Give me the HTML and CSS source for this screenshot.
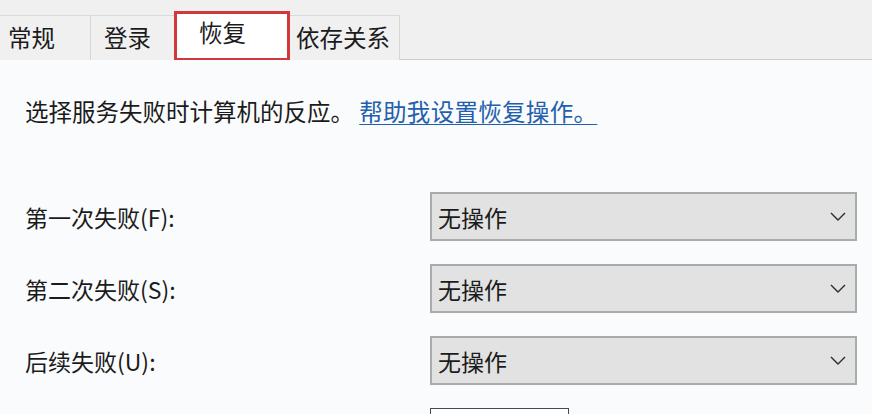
FILE: index.html
```html
<!DOCTYPE html>
<html lang="zh-CN">
<head>
<meta charset="utf-8">
<title>恢复</title>
<link rel="stylesheet" href="styles.css">
</head>
<body>
<div class="dialog">
  <div class="tabbar">
    <div class="tab tab-first">常规</div>
    <div class="tab tab-login">登录</div>
    <div class="tab tab-active">恢复</div>
    <div class="tab tab-dep">依存关系</div>
  </div>
  <div class="content">
    <p class="intro">选择服务失败时计算机的反应。 <a class="link" href="#">帮助我设置恢复操作。</a></p>
    <div class="rows">
      <div class="row">
        <span class="label">第一次失败(F):</span>
        <div class="select"><span class="value">无操作</span>
          <svg class="chev" width="16" height="9" viewBox="0 0 16 9"><polyline points="1,1 8,8 15,1" fill="none" stroke="#2b2b2b" stroke-width="1.4"/></svg>
        </div>
      </div>
      <div class="row">
        <span class="label">第二次失败(S):</span>
        <div class="select"><span class="value">无操作</span>
          <svg class="chev" width="16" height="9" viewBox="0 0 16 9"><polyline points="1,1 8,8 15,1" fill="none" stroke="#2b2b2b" stroke-width="1.4"/></svg>
        </div>
      </div>
      <div class="row">
        <span class="label">后续失败(U):</span>
        <div class="select"><span class="value">无操作</span>
          <svg class="chev" width="16" height="9" viewBox="0 0 16 9"><polyline points="1,1 8,8 15,1" fill="none" stroke="#2b2b2b" stroke-width="1.4"/></svg>
        </div>
      </div>
      <div class="row">
        <span class="label"></span>
        <div class="textbox"></div>
      </div>
    </div>
  </div>
</div>
</body>
</html>
```

FILE: styles.css
```css
html, body {
  margin: 0;
  padding: 0;
}
body {
  width: 872px;
  height: 414px;
  overflow: hidden;
  background: #fafbfc;
  font-family: "Noto Sans CJK SC", "Noto Sans", sans-serif;
  color: #1b1b1b;
}
.dialog {
  width: 872px;
  height: 414px;
  overflow: hidden;
  display: flex;
  flex-direction: column;
}
.tabbar {
  height: 60px;
  box-sizing: border-box;
  background: #f0f0f1;
  border-bottom: 1px solid #cbcbcb;
  display: flex;
  align-items: flex-end;
  padding-top: 16px;
  flex-shrink: 0;
}
.tab {
  box-sizing: border-box;
  display: flex;
  align-items: center;
  font-size: 23.5px;
  line-height: 1;
  border-top: 1px solid #dadada;
  border-right: 1px solid #d6d6d6;
  background: #f0f0f1;
  margin-bottom: -1px;
  height: 45px;
}
.tab-first {
  width: 91px;
  padding-left: 8px;
}
.tab-login {
  width: 84px;
  padding-left: 13px;
}
.tab-active {
  width: 116px;
  height: 50px;
  padding-left: 22px;
  padding-bottom: 6px;
  border: 3px solid #d2383b;
  background: #ffffff;
  margin-left: -1px;
  margin-bottom: -2px;
}
.tab-dep {
  width: 110px;
  padding-left: 6px;
}
.content {
  flex: 1;
  padding: 36px 0 0 25px;
  background: #fafbfc;
}
.intro {
  margin: 0;
  font-size: 23.5px;
  line-height: 30px;
  white-space: nowrap;
}
.link {
  color: #2260ad;
  text-decoration: underline;
  text-underline-offset: 3px;
  text-decoration-thickness: 1px;
  letter-spacing: 0.3px;
}
.rows {
  margin-top: 66px;
  display: flex;
  flex-direction: column;
  gap: 23px;
}
.row {
  display: flex;
  align-items: center;
}
.label {
  width: 405px;
  font-size: 23px;
  line-height: 30px;
  padding-top: 1px;
}
.select {
  width: 427px;
  height: 49px;
  box-sizing: border-box;
  background: #e2e2e3;
  border: 2px solid #ababab;
  display: flex;
  align-items: center;
  justify-content: space-between;
  padding: 0 9px 0 6px;
}
.value {
  font-size: 23px;
  line-height: 1;
  padding-top: 2px;
}
.chev {
  display: block;
}
.textbox {
  width: 139px;
  height: 40px;
  box-sizing: border-box;
  background: #ffffff;
  border: 1px solid #4a4a4a;
}
```
